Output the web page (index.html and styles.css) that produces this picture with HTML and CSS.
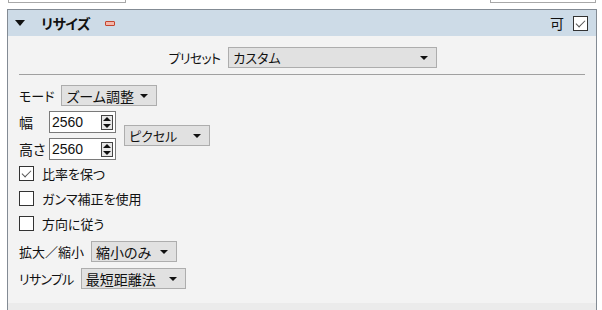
FILE: index.html
```html
<!DOCTYPE html>
<html lang="ja">

<head>
    <meta charset="UTF-8">
    <title>リサイズ</title>
    <link rel="stylesheet" href="styles.css">
</head>

<body>
    <!-- tabs above (cut off) -->
    <div class="top">
        <span class="tab"></span>
        <span class="tab right"></span>
    </div>

    <div class="panel">
        <!-- Header -->
        <div class="head">
            <span class="arrow"></span>
            <span class="title">リサイズ</span>
            <span class="minus"></span>
            <span class="grow"></span>
            <span class="ok">可</span>
            <span class="check on"></span>
        </div>

        <!-- Body -->
        <div class="body">
            <div class="preset">
                <span class="tight">プリセット</span>
                <div class="select wide">カスタム<i></i></div>
            </div>
            <hr>

            <div class="row">
                <span>モード</span>
                <div class="select mode">ズーム調整<i></i></div>
            </div>

            <div class="size">
                <div class="fields">
                    <div class="row">
                        <span class="lab">幅</span>
                        <div class="num">2560<b class="spin"></b></div>
                    </div>
                    <div class="row">
                        <span class="lab">高さ</span>
                        <div class="num">2560<b class="spin"></b></div>
                    </div>
                </div>
                <div class="select unit">ピクセル<i></i></div>
            </div>

            <label class="opt"><span class="check on"></span>比率を保つ</label>
            <label class="opt"><span class="check"></span>ガンマ補正を使用</label>
            <label class="opt"><span class="check"></span>方向に従う</label>

            <div class="row scale">
                <span>拡大／縮小</span>
                <div class="select shrink">縮小のみ<i></i></div>
            </div>
            <div class="row">
                <span class="tight">リサンプル</span>
                <div class="select resample">最短距離法<i></i></div>
            </div>
        </div>
        <div class="foot"></div>
    </div>
</body>

</html>
```
FILE: styles.css
```css
/* Reset */
* {
    margin: 0;
    padding: 0;
    box-sizing: border-box;
}

body {
    background: #fff;
    font-family: 'Noto Sans CJK JP', 'Noto Sans', sans-serif;
    font-feature-settings: "palt";
    font-size: 13px;
    color: #111;
    width: 602px;
    height: 310px;
    overflow: hidden;
}

.tight {
    letter-spacing: -0.7px;
}

/* Tabs above */
.top {
    display: flex;
    justify-content: space-between;
    height: 9px;
    padding: 0 6px 0 8px;
}

.tab {
    width: 118px;
    height: 3px;
    border: 1px solid #a8a8a8;
    border-top: none;
}

.tab.right {
    width: 106px;
}

/* Panel */
.panel {
    margin-left: 7px;
    width: 590px;
    border: 1px solid #838b94;
    border-bottom: none;
}

.head {
    display: flex;
    align-items: center;
    height: 26px;
    background: #cddbe7;
    padding: 0 8px 0 7px;
}

.arrow {
    width: 0;
    height: 0;
    border-left: 5px solid transparent;
    border-right: 5px solid transparent;
    border-top: 6px solid #111;
    margin-right: 16px;
}

.title {
    font-weight: bold;
    font-size: 14px;
    letter-spacing: -0.5px;
}

.minus {
    width: 10px;
    height: 5px;
    background: #f3b6aa;
    border: 1px solid #c4452f;
    border-radius: 1px;
    margin-left: 15px;
}

.grow {
    flex: 1;
}

.ok {
    font-size: 14px;
    margin-right: 9px;
}

.check {
    display: inline-block;
    position: relative;
    width: 15px;
    height: 15px;
    background: #fff;
    border: 1px solid #333;
}

.check.on::after {
    content: "";
    position: absolute;
    left: 4px;
    top: 1px;
    width: 4px;
    height: 8px;
    border: solid #555;
    border-width: 0 1.5px 1.5px 0;
    transform: rotate(45deg);
}

/* Body */
.body {
    background: #f3f3f3;
    height: 267px;
    padding: 11px 11px 0;
}

.foot {
    height: 8px;
    background: #ebebeb;
}

.preset {
    display: flex;
    justify-content: center;
    align-items: center;
    gap: 8px;
    padding-left: 2px;
}

hr {
    border: none;
    border-top: 1px solid #a0a0a0;
    margin: 6px 0 10px;
}

.row {
    display: flex;
    align-items: center;
    gap: 7px;
}

.select {
    display: flex;
    align-items: center;
    justify-content: space-between;
    height: 21px;
    padding: 0 8px 0 4px;
    background: #e1e1e1;
    border: 1px solid #adadad;
}

.select i {
    width: 0;
    height: 0;
    border-left: 4px solid transparent;
    border-right: 4px solid transparent;
    border-top: 4px solid #111;
}

.wide {
    width: 209px;
}

.mode {
    width: 96px;
    font-size: 14px;
}

.unit {
    width: 86px;
    margin-left: 8px;
}

.shrink {
    width: 86px;
    font-size: 14px;
}

.resample {
    width: 105px;
    font-size: 14px;
}

/* Width / height */
.size {
    display: flex;
    align-items: center;
    margin-top: 5px;
}

.fields .row {
    gap: 0;
    height: 22px;
}

.fields .row + .row {
    margin-top: 5px;
}

.lab {
    width: 30px;
    font-size: 14px;
}

.num {
    display: flex;
    align-items: center;
    justify-content: space-between;
    width: 67px;
    height: 22px;
    padding: 0 2px;
    background: #fff;
    border: 1px solid #7a7a7a;
    font-family: 'Liberation Sans', sans-serif;
    font-size: 14px;
}

.spin {
    position: relative;
    width: 12px;
    height: 15px;
    border: 1px solid #444;
    background: #e8e8e8;
}

.spin::before,
.spin::after {
    content: "";
    position: absolute;
    left: 1px;
    border-left: 4px solid transparent;
    border-right: 4px solid transparent;
}

.spin::before {
    top: 1px;
    border-bottom: 4px solid #111;
}

.spin::after {
    bottom: 1px;
    border-top: 4px solid #111;
}

/* Options */
.opt {
    display: flex;
    align-items: center;
    gap: 8px;
    height: 25px;
    margin-top: 1px;
}

.opt + .opt {
    margin-top: 0;
}

.scale {
    margin: 5px 0 6px;
}
```
